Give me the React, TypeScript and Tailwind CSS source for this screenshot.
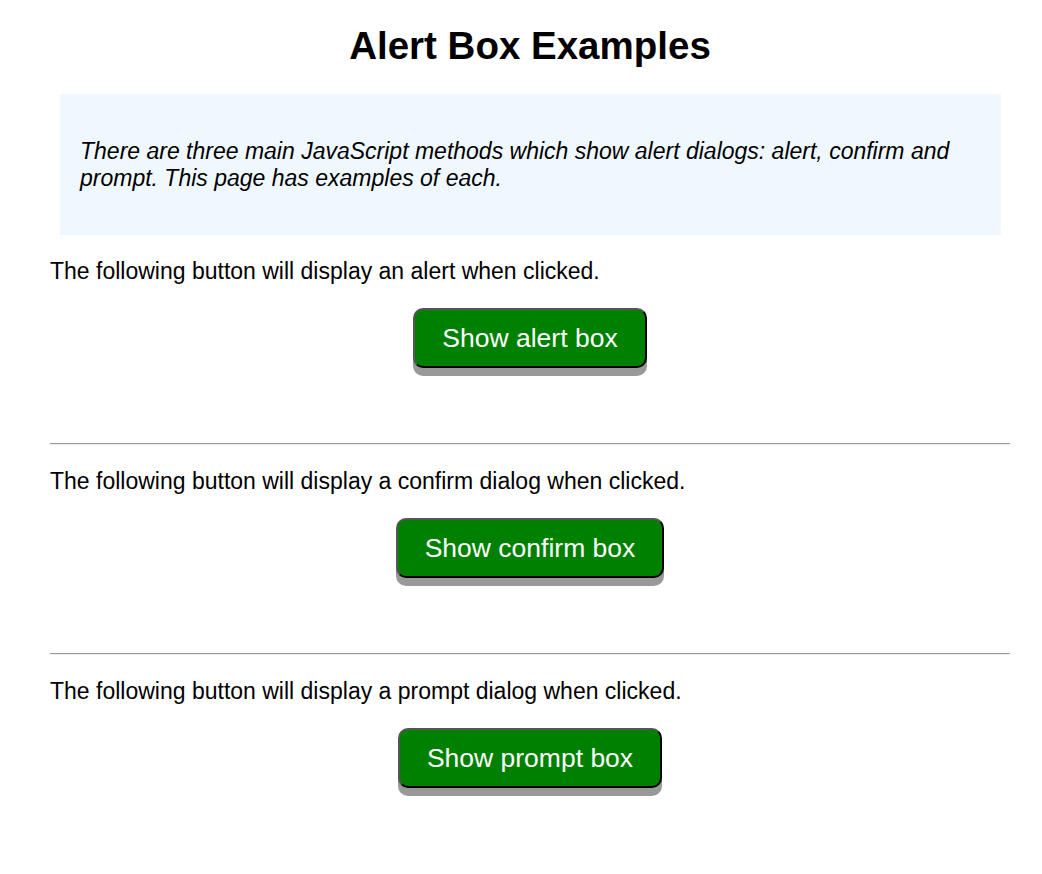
import React from "react";

function Section({ text, label, last }: { text: string; label: string; last?: boolean }) {
  return (
    <div>
      <p className="mt-[23px] mb-0 text-[23px] leading-[27px]">{text}</p>
      <div className="flex justify-center mt-[23px]">
        <button className="bg-[#008000] text-white text-[26.5px] leading-[30px] px-[27px] py-[13px] rounded-[10px] border-2 border-t-[#555] border-l-[#555] border-b-black border-r-black shadow-[0_8px_0_#999]">
          {label}
        </button>
      </div>
      {!last && <hr className="mt-[75px] h-0 border-0 border-t border-b border-t-[#9a9a9a] border-b-[#eee]" />}
    </div>
  );
}

export default function App() {
  return (
    <div className="bg-white min-h-[874px] text-black" style={{ fontFamily: '"Liberation Sans", Arial, sans-serif' }}>
      <div className="ml-[50px] w-[960px] pt-[25px]">
        <h1 className="text-[38.5px] leading-[42px] font-bold text-center m-0">Alert Box Examples</h1>
        <div className="mt-[27px] ml-[10px] mr-[9px] bg-[#f0f8ff] px-[20px] py-[20px]">
          <p className="my-[23.5px] italic text-[23px] leading-[27px]">
            There are three main JavaScript methods which show alert dialogs: alert, confirm and prompt. This page has examples of each.
          </p>
        </div>
        <Section text="The following button will display an alert when clicked." label="Show alert box" />
        <Section text="The following button will display a confirm dialog when clicked." label="Show confirm box" />
        <Section text="The following button will display a prompt dialog when clicked." label="Show prompt box" last />
      </div>
    </div>
  );
}
